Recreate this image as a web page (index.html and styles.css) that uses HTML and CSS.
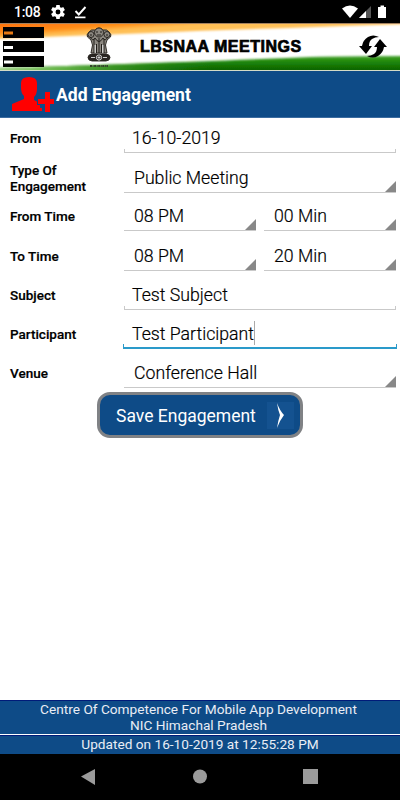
FILE: index.html
```html
<!DOCTYPE html>
<html lang="en">
<head>
<meta charset="utf-8">
<title>LBSNAA Meetings</title>
<link rel="stylesheet" href="styles.css">
</head>
<body>
<div class="screen">
  <div class="status">
    <span class="clock">1:08</span>
    <svg class="gear" width="14" height="14" viewBox="2 2 20 20"><path fill="#fff" d="M19.43 12.98c.04-.32.07-.64.07-.98s-.03-.66-.07-.98l2.11-1.65c.19-.15.24-.42.12-.64l-2-3.46c-.12-.22-.39-.3-.61-.22l-2.49 1c-.52-.4-1.08-.73-1.69-.98l-.38-2.65C14.46 2.18 14.25 2 14 2h-4c-.25 0-.46.18-.49.42l-.38 2.65c-.61.25-1.17.59-1.69.98l-2.49-1c-.23-.09-.49 0-.61.22l-2 3.46c-.13.22-.07.49.12.64l2.11 1.65c-.04.32-.07.65-.07.98s.03.66.07.98l-2.11 1.65c-.19.15-.24.42-.12.64l2 3.46c.12.22.39.3.61.22l2.49-1c.52.4 1.08.73 1.69.98l.38 2.65c.03.24.24.42.49.42h4c.25 0 .46-.18.49-.42l.38-2.65c.61-.25 1.17-.59 1.69-.98l2.49 1c.23.09.49 0 .61-.22l2-3.46c.12-.22.07-.49-.12-.64l-2.11-1.65zM12 15.500a3.500 3.500 0 1 1 0-7 3.500 3.500 0 0 1 0 7z"/></svg>
    <svg class="done" width="13" height="13" viewBox="0 0 13 13"><path d="M1.500 5l3.300 3.500L11.500 1" fill="none" stroke="#fff" stroke-width="1.900"/><path d="M1 11.400h10.500" stroke="#fff" stroke-width="1.700"/></svg>
    <svg class="signals" width="48" height="14" viewBox="0 0 48 14"><path fill="#fff" d="M0 3.500Q8 -2.500 16 3.500L8 13z"/><path fill="#555" d="M29 1v12H17z"/><path fill="#fff" d="M24 6v7h-7z"/><path fill="#fff" d="M36 2h2.500V.5h3.500V2H44v11h-8z"/></svg>
  </div>
  <header class="banner">
    <svg class="flag" width="400" height="48" viewBox="0 0 400 48">
      <defs>
        <linearGradient id="saffron" gradientUnits="userSpaceOnUse" x1="0" y1="0" x2="1" y2="15"><stop offset="0" stop-color="#ff7010"/><stop offset=".65" stop-color="#ff8d14"/><stop offset="1" stop-color="#ffc056"/></linearGradient>
        <linearGradient id="leaf" gradientUnits="userSpaceOnUse" x1="0" y1="33" x2="0" y2="47"><stop offset="0" stop-color="#48a432"/><stop offset=".35" stop-color="#228b0c"/><stop offset="1" stop-color="#0b6300"/></linearGradient>
        <linearGradient id="leafEdge" x1="0" y1="0" x2="1" y2="0"><stop offset="0" stop-color="#a8d890"/><stop offset=".25" stop-color="#65b548"/><stop offset=".8" stop-color="#288c14" stop-opacity="0"/></linearGradient>
        <filter id="soft" x="-5%" y="-30%" width="110%" height="160%"><feGaussianBlur stdDeviation="0 .8"/></filter>
      </defs>
      <path fill="#fff" d="M0 0h400v48H0z"/>
      <g filter="url(#soft)">
        <path fill="url(#saffron)" d="M-9-4H409V1Q350 3 290 5Q220 7 150 10Q70 13 -9 16z"/>
        <path fill="url(#leaf)" d="M-9 45Q80 43 150 40Q210 38 310 34Q350 33 409 33V52H-9z"/>
        <path fill="url(#leafEdge)" d="M-9 45Q80 43 150 40Q210 38 265 35V52H-9z"/>
      </g>
      <path stroke="#d4dbc6" d="M0 47.500h400"/><path stroke="#a48260" d="M0 .5h400"/>
    </svg>
    <svg class="menu" width="44" height="48" viewBox="0 0 44 48"><path d="M3 4h41v11H3zM3 18h41v11H3zM3 33h41v11H3z"/><path fill="#e97a12" d="M4 8.500h9v3H4z"/><path fill="#fff" d="M4 23h9v3H4zM4 37.500h9v3H4z"/></svg>
    <svg class="emblem" width="28" height="43" viewBox="0 0 28 43">
      <g fill="#8b8780" stroke="#211e1a" stroke-width=".9">
        <path d="M4 6q-3 3-1.500 5Q7 13 7.500 19L6 27h16l-1.500-8Q21 13 25.500 11 27 9 24 6q-2-3-6-2-4-4-8 0-4-1-6 2z"/>
        <circle cx="14" cy="6.500" r="4.500"/><circle cx="6" cy="8.500" r="3"/><circle cx="22" cy="8.500" r="3"/>
        <path d="M3 31.500q0-3 4-3.500h14q4 .5 4 3.500T21 35H7q-4-.5-4-3.500z" fill="#292522"/>
      </g>
      <path d="M9 13v14M11.500 18v9M14 12v15M16.500 18v9M19 13v14" fill="none" stroke="#211e1a"/><path d="M10.200 19v8M17.800 19v8" stroke="#eee"/>
      <path d="M5 11q3 5 5 1 4 7 8 0 2 4 5-1M11 6h2M15 6h2M12 9h4M5 9h2M21 9h2" fill="none" stroke="#211e1a"/>
      <circle cx="14" cy="31.500" r="2.600" fill="none" stroke="#ddd"/><path d="M6 31.500h4M18 31.500h4M14 30v3M12.500 31.500h3" stroke="#ccc"/>
      <path d="M5 40h18" stroke="#34432b" stroke-width="1.800" stroke-dasharray="2 .6 1 .5"/>
    </svg>
    <h1 class="brand">LBSNAA MEETINGS</h1>
    <svg class="sync" width="28" height="23" viewBox="0 0 28 23"><path fill="#000" d="M20 2Q14-1 9 2 4 5 3 11H0l7 8 6-8h-3q0-5 3-7 3-2 7-2z"/><path fill="#000" d="M8 21q6 3 11 0 5-3 6-9h3l-7-8-6 8h3q0 5-3 7-3 2-7 2z"/></svg>
  </header>
  <div class="title">
    <svg class="person" width="42" height="36" viewBox="0 0 42 36"><path fill="#f00" d="M9 7Q9 1 17 1t8 6v6q0 5-3 8v3l6 3v5h2v3H0v-7l12-5v-3q-3-3-3-8z"/><path fill="#f00" stroke="#0e4b87" stroke-width="2" paint-order="stroke" d="M33 16h5v7h4v5h-4v8h-5v-8h-7v-5h7z"/></svg>
    <h2>Add Engagement</h2>
  </div>
  <form class="form">
    <div class="row r1"><label>From</label><div class="field edit">16-10-2019</div></div>
    <div class="row r2"><label>Type Of<br>Engagement</label><div class="field spin">Public Meeting</div></div>
    <div class="row r3"><label>From Time</label><div class="field spin half">08 PM</div><div class="field spin">00 Min</div></div>
    <div class="row r4"><label>To Time</label><div class="field spin half">08 PM</div><div class="field spin">20 Min</div></div>
    <div class="row r5"><label>Subject</label><div class="field edit">Test Subject</div></div>
    <div class="row r6"><label>Participant</label><div class="field edit focus">Test Participant<i class="caret"></i></div></div>
    <div class="row r7"><label>Venue</label><div class="field spin">Conference Hall</div></div>
    <button type="button" class="save"><span>Save Engagement</span><svg width="27" height="27" viewBox="0 0 27 27"><path fill="#145290" d="M0 0h27v27H0z"/><path fill="#fff" d="M10 1q3 8 7 12-4 5-7 13 1-7 3-13-2-5-3-12z"/></svg></button>
  </form>
  <footer>
    <div class="credit">Centre Of Competence For Mobile App Development<br>NIC Himachal Pradesh</div>
    <div class="updated">Updated on 16-10-2019 at 12:55:28 PM</div>
  </footer>
  <nav class="nav">
    <svg width="400" height="46" viewBox="0 0 400 46"><path fill="#9b9b9b" d="M81 22.500L95 15v16zM303 15h15v15h-15z"/><circle cx="200" cy="22.500" r="7" fill="#9b9b9b"/></svg>
  </nav>
</div>
</body>
</html>
```
FILE: styles.css
```css
* { box-sizing: border-box; }
body { margin: 0; background: #fff; color: #000; font-family: Roboto, "Liberation Sans", sans-serif; }
h1, h2 { margin: 0; }
svg { display: block; flex: none; }
.screen { width: 400px; height: 800px; display: flex; flex-direction: column; overflow: hidden; }
.status { height: 23px; flex: none; background: #000; color: #fff; display: flex; align-items: center; padding: 1px 18px 0 14px; }
.clock { width: 37px; font-size: 14px; font-weight: 500; letter-spacing: -.3px; white-space: nowrap; }
.done { margin-left: 9px; }
.signals { margin-left: auto; margin-right: -8px; }
.banner { height: 48px; flex: none; position: relative; display: flex; align-items: flex-start; }
.flag { position: absolute; left: 0; top: 0; }
.menu, .emblem, .brand, .sync { position: relative; }
.emblem { margin: 3px 0 0 41px; }
.brand { margin: 15px 0 0 27px; width: 162px; font: 900 16px/18px "Liberation Sans", sans-serif; letter-spacing: .5px; white-space: nowrap; -webkit-text-stroke: .7px #000; }
.sync { margin: 12px 0 0 57px; }
.title { height: 47px; flex: none; background: #0e4b87; border-bottom: 1px solid #3c6ca0; color: #fff; display: flex; align-items: center; padding-left: 12px; }
.title h2 { font-size: 17.55px; font-weight: 700; margin-left: 2px; padding-top: 2px; line-height: 24px; }
.form { flex: 1; display: flex; flex-direction: column; }
.row { display: flex; align-items: stretch; padding: 0 4px 0 10px; }
.r1 { height: 35px; } .r2 { height: 40px; } .r3 { height: 38px; } .r4 { height: 40px; }
.r5 { height: 39px; } .r6 { height: 39px; } .r7 { height: 39px; }
label { width: 114px; flex: none; display: flex; align-items: center; font-size: 13.5px; line-height: 16px; font-weight: 500; -webkit-text-stroke: .2px #000; padding-top: 5px; }
.r2 label { padding-top: 9px; }
.r3 label, .r5 label, .r6 label, .r7 label { padding-top: 8px; }
.r4 label { padding-top: 9px; }
.field { flex: 1; display: flex; align-items: flex-end; font-size: 17.7px; font-weight: 300; -webkit-text-stroke: .2px #000; line-height: 22px; border-bottom: 1px solid #c9c9c9; padding: 0 0 3px 8px; white-space: nowrap; }
.spin { padding: 0 0 3px 10px; position: relative; }
.spin::after { content: ""; position: absolute; right: 0; bottom: 0; width: 11px; height: 11px; background: #888; clip-path: polygon(100% 0, 100% 100%, 0 100%); }
.half { flex: none; width: 132px; margin-right: 8px; }
.edit { background: linear-gradient(#c9c9c9, #c9c9c9) left bottom / 1px 3px no-repeat, linear-gradient(#c9c9c9, #c9c9c9) right bottom / 1px 3px no-repeat; }
.focus { margin: 0 -1px; padding: 0 0 2px 9px; border-bottom: 2px solid #2a9aca; background: linear-gradient(#2a9aca, #2a9aca) left bottom / 1px 3px no-repeat, linear-gradient(#2a9aca, #2a9aca) right bottom / 1px 3px no-repeat; }
.caret { width: 1px; height: 24px; background: #aaa; }
.save { margin: 4px auto 0; position: relative; width: 206px; height: 46px; padding: 1px 6px 0 16px; border: 3px solid #808285; border-radius: 13px; background: #0e4b87; color: #fff; font: 400 17.5px/24px Roboto, sans-serif; display: flex; align-items: center; justify-content: space-between; white-space: nowrap; }
footer { flex: none; text-align: center; color: #e9edf5; font-size: 13.67px; line-height: 16px; }
.credit { height: 34px; padding: 0 3px 0 0; background: #0e4b87; border-top: 1px solid #001b79; }
.updated { height: 19px; margin-top: 1px; background: #0e4b87; border-top: 1px solid #001b79; }
.nav { height: 46px; flex: none; background: #000; }
```
